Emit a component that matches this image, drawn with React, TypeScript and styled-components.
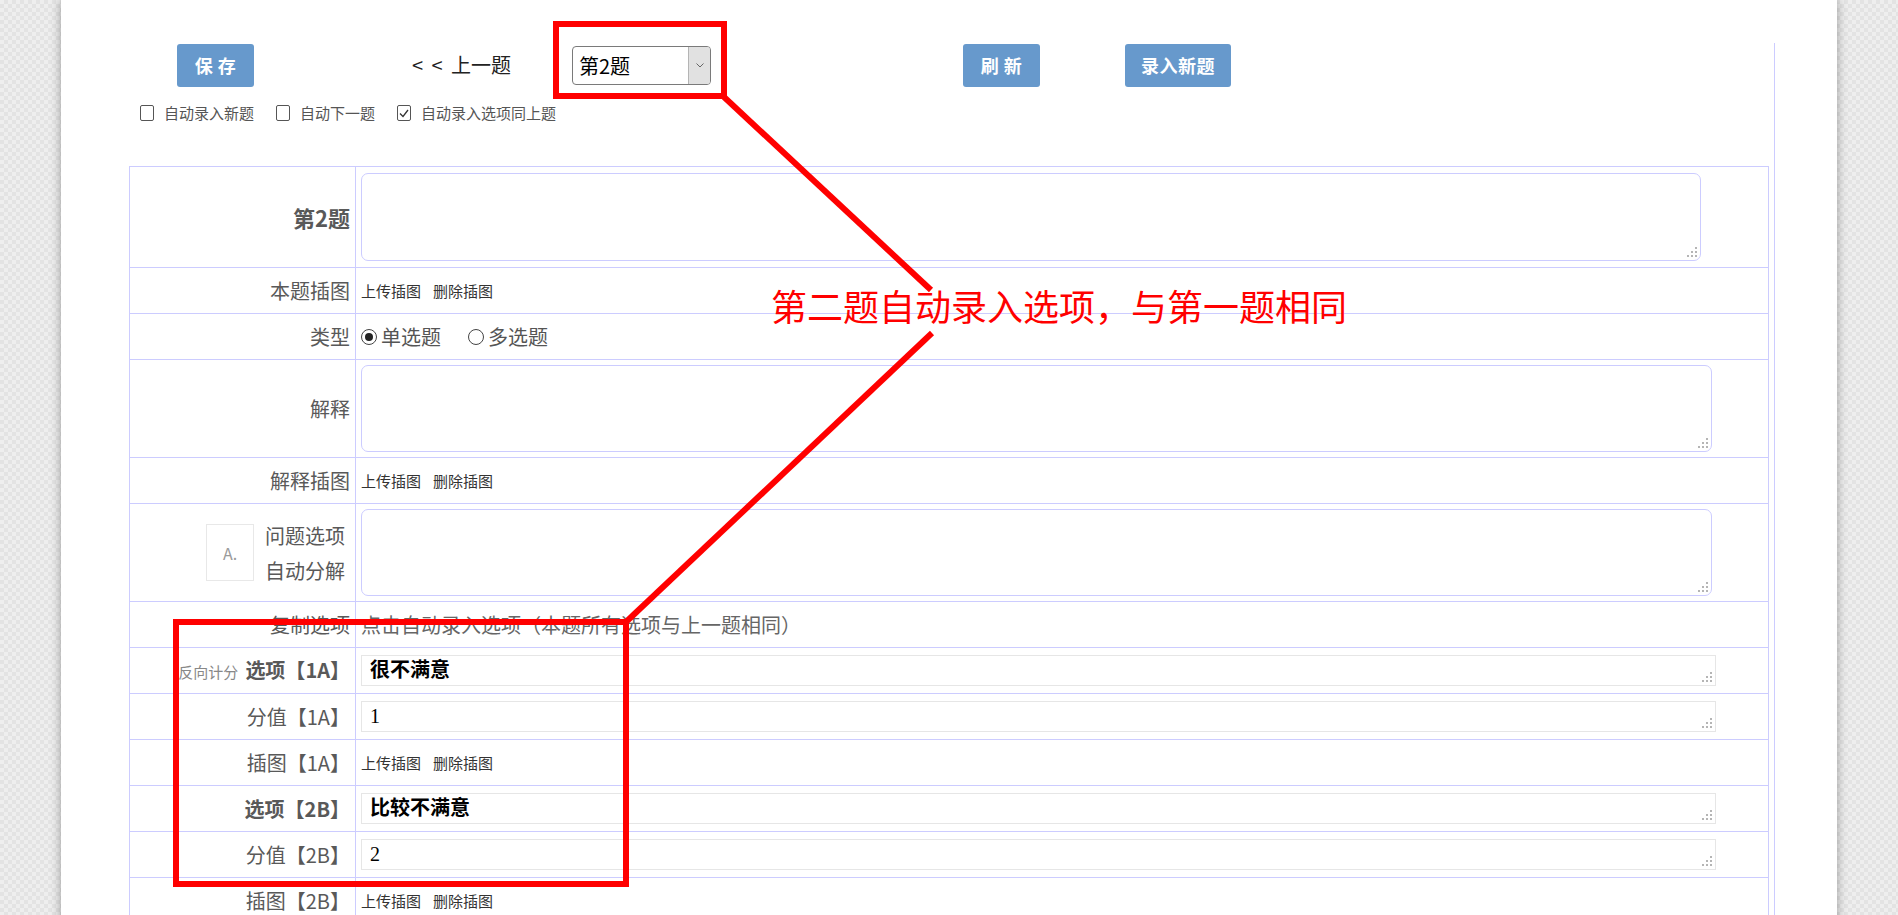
import React from "react";
import styled, { createGlobalStyle } from "styled-components";

const CJK = `"Noto Sans CJK SC", "Noto Sans", sans-serif`;

const GlobalStyle = createGlobalStyle`
  html, body { margin: 0; padding: 0; overflow: hidden; }
  body {
    font-family: ${CJK};
    background-color: #e9e9e9;
    background-image: repeating-conic-gradient(#e3e3e3 0 25%, #eeeeee 0 50%);
    background-size: 8px 8px;
  }
`;

const Stage = styled.div`
  position: relative;
  width: 1898px;
  height: 915px;
  overflow: hidden;
`;

const Page = styled.div`
  width: 1776px;
  min-height: 915px;
  margin: 0 auto;
  padding-top: 31px;
  box-sizing: border-box;
  background: #fff;
  box-shadow: 0 0 10px rgba(0, 0, 0, 0.35);
`;

const Frame = styled.div`
  margin: 0 62px 0 45px;
  padding: 0 5px 0 23px;
  min-height: 884px;
  border-right: 1px solid #ccccff;
`;

const Toolbar = styled.div`
  display: flex;
  align-items: center;
  height: 44px;
  margin-top: 12px;
`;

const ActionButton = styled.button<{ $offset: number; $w: number }>`
  margin-left: ${(p) => p.$offset}px;
  width: ${(p) => p.$w}px;
  height: 43px;
  padding: 0;
  border: 0;
  border-radius: 3px;
  background: #6799cc;
  color: #fff;
  font-family: ${CJK};
  font-size: 18px;
  font-weight: 700;
  letter-spacing: 0.5px;
`;

const PrevLink = styled.span`
  margin-left: 158px;
  width: 99px;
  display: flex;
  align-items: center;
  font-size: 20px;
  line-height: 24px;
  color: #222;
  white-space: nowrap;
`;

const Chevron = styled.span`
  width: 20px;
`;

const Select = styled.div`
  margin-left: 61px;
  width: 139px;
  height: 39px;
  box-sizing: border-box;
  display: flex;
  border: 1px solid #7a7a7a;
  border-radius: 4px;
  overflow: hidden;
  background: #fff;
`;

const SelectValue = styled.span`
  flex: 1;
  padding-left: 6px;
  font-size: 20px;
  line-height: 37px;
  color: #000;
`;

const SelectArrow = styled.span`
  width: 21px;
  display: flex;
  align-items: center;
  justify-content: center;
  background: #e1e1e1;
  border-left: 1px solid #b4b4b4;
`;

const CheckRow = styled.div`
  display: flex;
  align-items: center;
  gap: 22px;
  height: 20px;
  margin-top: 16px;
  padding-left: 11px;
`;

const CheckItem = styled.label`
  display: flex;
  align-items: center;
  gap: 10px;
  font-size: 15px;
  line-height: 20px;
  color: #555;
`;

const CheckBox = styled.span`
  width: 14px;
  height: 16px;
  box-sizing: border-box;
  border: 1px solid #555;
  border-radius: 2px;
  display: flex;
  align-items: center;
  justify-content: center;
  background: #fff;
`;

const FormTable = styled.table`
  margin-top: 43px;
  width: 1640px;
  border-collapse: collapse;
  table-layout: fixed;
  font-size: 20px;
  color: #595959;
`;

const LabelCol = styled.col`
  width: 226px;
`;

const Row = styled.tr<{ $h?: number }>`
  height: ${(p) => p.$h ?? 46}px;
`;

const LabelCell = styled.td<{ $bold?: boolean }>`
  border: 1px solid #ccccff;
  padding: 0 5px 0 0;
  text-align: right;
  vertical-align: middle;
  white-space: nowrap;
  line-height: 26px;
  font-size: ${(p) => (p.$bold ? 22 : 20)}px;
  font-weight: ${(p) => (p.$bold ? 700 : 400)};
`;

const ValueCell = styled.td`
  border: 1px solid #ccccff;
  padding: 0 0 0 5px;
  vertical-align: middle;
  line-height: 26px;
`;

const SmallNote = styled.span`
  margin-right: 7px;
  font-size: 15px;
  font-weight: 400;
  color: #888;
`;

const Bold = styled.span`
  font-weight: 700;
`;

const SplitLabel = styled.div`
  display: flex;
  align-items: center;
  justify-content: flex-end;
  gap: 11px;
  padding-right: 5px;
`;

const LetterBox = styled.div`
  width: 48px;
  height: 57px;
  box-sizing: border-box;
  border: 1px solid #e8e8e8;
  display: flex;
  align-items: center;
  justify-content: center;
  font-size: 16px;
  color: #9a9a9a;
`;

const StackText = styled.div`
  display: flex;
  flex-direction: column;
  line-height: 35px;
  text-align: left;
`;

const TextBox = styled.div<{ $w: number; $h: number }>`
  position: relative;
  width: ${(p) => p.$w}px;
  height: ${(p) => p.$h}px;
  box-sizing: border-box;
  border: 1px solid #ccccff;
  border-radius: 7px;
`;

const LineBox = styled.div<{ $bold?: boolean }>`
  position: relative;
  width: 1355px;
  height: 31px;
  box-sizing: border-box;
  border: 1px solid #e6e6e6;
  padding-left: 8px;
  font-family: "Liberation Serif", "Noto Sans CJK SC", serif;
  font-size: 20px;
  font-weight: ${(p) => (p.$bold ? 700 : 400)};
  line-height: 29px;
  color: #000;
`;

const Grip = styled.svg`
  position: absolute;
  right: 3px;
  bottom: 3px;
`;

const Links = styled.div`
  display: flex;
  gap: 12px;
  font-size: 15px;
  color: #333;
`;

const RadioGroup = styled.div`
  display: flex;
  align-items: center;
  gap: 27px;
`;

const RadioItem = styled.label`
  display: flex;
  align-items: center;
  gap: 4px;
  color: #555;
`;

const Radio = styled.span<{ $on?: boolean }>`
  width: 16px;
  height: 16px;
  box-sizing: border-box;
  border-radius: 50%;
  border: 1px solid #444;
  display: flex;
  align-items: center;
  justify-content: center;
  &::after {
    content: "";
    width: 8px;
    height: 8px;
    border-radius: 50%;
    background: ${(p) => (p.$on ? "#222" : "transparent")};
  }
`;

const HintText = styled.span`
  color: #666;
`;

const Overlay = styled.svg`
  position: absolute;
  left: 0;
  top: 0;
  pointer-events: none;
`;

const RedFrame = styled.div<{ $x: number; $y: number; $w: number; $h: number }>`
  position: absolute;
  left: ${(p) => p.$x}px;
  top: ${(p) => p.$y}px;
  width: ${(p) => p.$w}px;
  height: ${(p) => p.$h}px;
  box-sizing: border-box;
  border: 6px solid #ff0000;
  pointer-events: none;
`;

const Callout = styled.div`
  position: absolute;
  left: 771px;
  top: 287px;
  font-size: 36px;
  line-height: 36px;
  color: #ff0000;
  white-space: nowrap;
`;

const GripIcon = () => (
  <Grip width="10" height="10" viewBox="0 0 10 10">
    <g fill="#b5b5b5">
      <rect x="8" y="0" width="2" height="2" />
      <rect x="8" y="4" width="2" height="2" />
      <rect x="8" y="8" width="2" height="2" />
      <rect x="4" y="4" width="2" height="2" />
      <rect x="4" y="8" width="2" height="2" />
      <rect x="0" y="8" width="2" height="2" />
    </g>
  </Grip>
);

const Area = ({ w, h }: { w: number; h: number }) => (
  <TextBox $w={w} $h={h}>
    <GripIcon />
  </TextBox>
);

const Line = ({ value, bold }: { value: string; bold?: boolean }) => (
  <LineBox $bold={bold}>
    {value}
    <GripIcon />
  </LineBox>
);

const ImageLinks = () => (
  <Links>
    <span>上传插图</span>
    <span>删除插图</span>
  </Links>
);

const options = [
  { key: "1A", text: "很不满意", score: "1", note: true },
  { key: "2B", text: "比较不满意", score: "2", note: false },
  { key: "3C", text: "一般", score: "3", note: false },
];

export default function App() {
  return (
    <Stage>
      <GlobalStyle />
      <Page>
        <Frame>
          <Toolbar>
            <ActionButton $offset={48} $w={77}>保 存</ActionButton>
            <PrevLink>
              <Chevron>&lt;</Chevron>
              <Chevron>&lt;</Chevron>
              上一题
            </PrevLink>
            <Select>
              <SelectValue>第2题</SelectValue>
              <SelectArrow>
                <svg width="8" height="5" viewBox="0 0 8 5">
                  <path d="M0.5 0.5 L4 4 L7.5 0.5" fill="none" stroke="#666" strokeWidth="1" />
                </svg>
              </SelectArrow>
            </Select>
            <ActionButton $offset={252} $w={77}>刷 新</ActionButton>
            <ActionButton $offset={85} $w={106}>录入新题</ActionButton>
          </Toolbar>
          <CheckRow>
            <CheckItem>
              <CheckBox />
              自动录入新题
            </CheckItem>
            <CheckItem>
              <CheckBox />
              自动下一题
            </CheckItem>
            <CheckItem>
              <CheckBox>
                <svg width="10" height="9" viewBox="0 0 10 9">
                  <path d="M1 4.5 L4 7.5 L9 1" fill="none" stroke="#333" strokeWidth="1.3" />
                </svg>
              </CheckBox>
              自动录入选项同上题
            </CheckItem>
          </CheckRow>
          <FormTable>
            <colgroup>
              <LabelCol />
              <col />
            </colgroup>
            <tbody>
              <Row $h={101}>
                <LabelCell $bold>第2题</LabelCell>
                <ValueCell>
                  <Area w={1340} h={88} />
                </ValueCell>
              </Row>
              <Row>
                <LabelCell>本题插图</LabelCell>
                <ValueCell>
                  <ImageLinks />
                </ValueCell>
              </Row>
              <Row>
                <LabelCell>类型</LabelCell>
                <ValueCell>
                  <RadioGroup>
                    <RadioItem>
                      <Radio $on />
                      单选题
                    </RadioItem>
                    <RadioItem>
                      <Radio />
                      多选题
                    </RadioItem>
                  </RadioGroup>
                </ValueCell>
              </Row>
              <Row $h={98}>
                <LabelCell>解释</LabelCell>
                <ValueCell>
                  <Area w={1351} h={87} />
                </ValueCell>
              </Row>
              <Row>
                <LabelCell>解释插图</LabelCell>
                <ValueCell>
                  <ImageLinks />
                </ValueCell>
              </Row>
              <Row $h={98}>
                <LabelCell>
                  <SplitLabel>
                    <LetterBox>A.</LetterBox>
                    <StackText>
                      <span>问题选项</span>
                      <span>自动分解</span>
                    </StackText>
                  </SplitLabel>
                </LabelCell>
                <ValueCell>
                  <Area w={1351} h={87} />
                </ValueCell>
              </Row>
              <Row>
                <LabelCell>复制选项</LabelCell>
                <ValueCell>
                  <HintText>点击自动录入选项（本题所有选项与上一题相同）</HintText>
                </ValueCell>
              </Row>
              {options.map((o) => (
                <React.Fragment key={o.key}>
                  <Row>
                    <LabelCell>
                      {o.note && <SmallNote>反向计分</SmallNote>}
                      <Bold>选项【{o.key}】</Bold>
                    </LabelCell>
                    <ValueCell>
                      <Line value={o.text} bold />
                    </ValueCell>
                  </Row>
                  <Row>
                    <LabelCell>分值【{o.key}】</LabelCell>
                    <ValueCell>
                      <Line value={o.score} />
                    </ValueCell>
                  </Row>
                  <Row>
                    <LabelCell>插图【{o.key}】</LabelCell>
                    <ValueCell>
                      <ImageLinks />
                    </ValueCell>
                  </Row>
                </React.Fragment>
              ))}
            </tbody>
          </FormTable>
        </Frame>
      </Page>

      <Overlay width="1898" height="915" viewBox="0 0 1898 915">
        <line x1="724" y1="97" x2="931" y2="290" stroke="#ff0000" strokeWidth="6" />
        <line x1="932" y1="333" x2="627" y2="621" stroke="#ff0000" strokeWidth="6" />
      </Overlay>
      <RedFrame $x={553} $y={21} $w={174} $h={78} />
      <RedFrame $x={173} $y={619} $w={456} $h={268} />
      <Callout>第二题自动录入选项，与第一题相同</Callout>
    </Stage>
  );
}
